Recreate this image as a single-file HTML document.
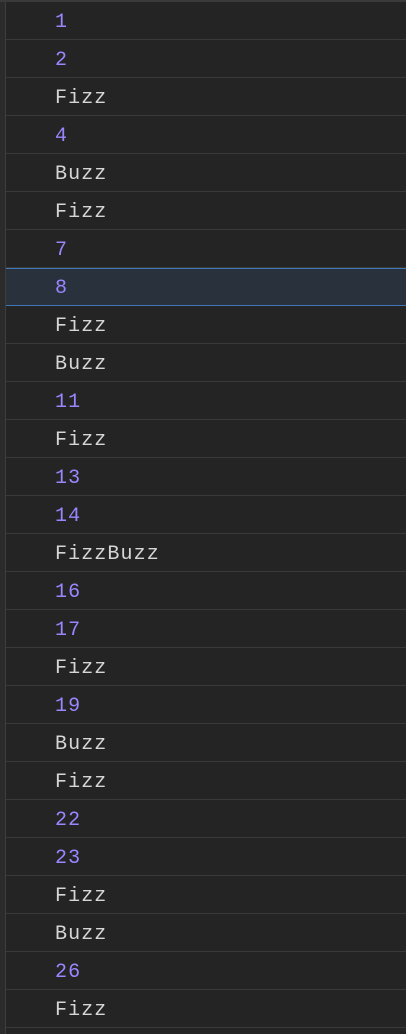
<html><head><style>
body{margin:0;background:#242424;width:406px;height:1034px;overflow:hidden;font-family:"Liberation Mono",monospace;font-size:20px;letter-spacing:1.1px}
.gut{position:absolute;left:0;top:0;width:5px;height:1034px;background:#2b2b2b;border-right:1px solid #3d3d3d}
.top{position:absolute;left:0;top:0;width:406px;height:2px;background:#3a3a3a}
.r{position:absolute;left:6px;width:400px;border-bottom:1px solid #3a3a3a;line-height:42px;padding-left:49px;box-sizing:border-box;height:38px;overflow:hidden}
.n{color:#9a86ff}.s{color:#d6d6d6}
.sel{background:#29313d;border-top:1px solid #3f76b5;border-bottom:1px solid #3f76b5;line-height:40px}
</style></head><body>
<div class="gut"></div><div class="top"></div>
<div class="r n" style="top:2px">1</div>
<div class="r n" style="top:40px">2</div>
<div class="r s" style="top:78px">Fizz</div>
<div class="r n" style="top:116px">4</div>
<div class="r s" style="top:154px">Buzz</div>
<div class="r s" style="top:192px">Fizz</div>
<div class="r n" style="top:230px">7</div>
<div class="r n sel" style="top:268px">8</div>
<div class="r s" style="top:306px">Fizz</div>
<div class="r s" style="top:344px">Buzz</div>
<div class="r n" style="top:382px">11</div>
<div class="r s" style="top:420px">Fizz</div>
<div class="r n" style="top:458px">13</div>
<div class="r n" style="top:496px">14</div>
<div class="r s" style="top:534px">FizzBuzz</div>
<div class="r n" style="top:572px">16</div>
<div class="r n" style="top:610px">17</div>
<div class="r s" style="top:648px">Fizz</div>
<div class="r n" style="top:686px">19</div>
<div class="r s" style="top:724px">Buzz</div>
<div class="r s" style="top:762px">Fizz</div>
<div class="r n" style="top:800px">22</div>
<div class="r n" style="top:838px">23</div>
<div class="r s" style="top:876px">Fizz</div>
<div class="r s" style="top:914px">Buzz</div>
<div class="r n" style="top:952px">26</div>
<div class="r s" style="top:990px">Fizz</div>
</body></html>
